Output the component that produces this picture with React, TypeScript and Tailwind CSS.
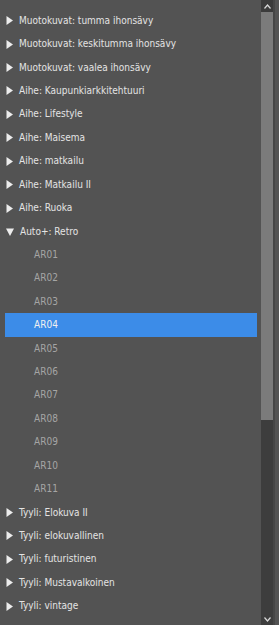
import React from "react";

const before = [
  "Muotokuvat: tumma ihonsävy",
  "Muotokuvat: keskitumma ihonsävy",
  "Muotokuvat: vaalea ihonsävy",
  "Aihe: Kaupunkiarkkitehtuuri",
  "Aihe: Lifestyle",
  "Aihe: Maisema",
  "Aihe: matkailu",
  "Aihe: Matkailu II",
  "Aihe: Ruoka",
];
const items = ["AR01","AR02","AR03","AR04","AR05","AR06","AR07","AR08","AR09","AR10","AR11"];
const after = [
  "Tyyli: Elokuva II",
  "Tyyli: elokuvallinen",
  "Tyyli: futuristinen",
  "Tyyli: Mustavalkoinen",
  "Tyyli: vintage",
];

function Tri({ open }: { open?: boolean }) {
  return open ? (
    <svg width="8" height="8" viewBox="0 0 8 8" className="shrink-0">
      <path d="M0 0.5 L8 0.5 L4 8 Z" fill="#ececec" />
    </svg>
  ) : (
    <svg width="7" height="9" viewBox="0 0 7 9" className="shrink-0">
      <path d="M0.5 0 L7 4.5 L0.5 9 Z" fill="#ececec" />
    </svg>
  );
}

function Group({ label, open }: { label: string; open?: boolean }) {
  return (
    <div className="h-[23.43px] flex items-center pl-[6px] gap-[6px] text-[#e4e4e4]">
      <Tri open={open} />
      <span>{label}</span>
    </div>
  );
}

export default function App() {
  return (
    <div
      className="w-[279px] h-[625px] bg-[#535353] flex overflow-hidden text-[10px] leading-none"
      style={{ fontFamily: '"DejaVu Sans Condensed", "Liberation Sans", sans-serif' }}
    >
      <div className="flex-1 pt-[9px]">
        {before.map((t) => (
          <Group key={t} label={t} />
        ))}
        <Group label="Auto+: Retro" open />
        {items.map((t) => (
          <div
            key={t}
            className={
              "h-[23.43px] flex items-center ml-[5px] mr-[4px] pl-[29px] " +
              (t === "AR04" ? "bg-[#3c8ce8] text-[#f0f0f0]" : "text-[#a5a5a5]")
            }
          >
            {t}
          </div>
        ))}
        {after.map((t) => (
          <Group key={t} label={t} />
        ))}
      </div>
      <div className="w-[12px] flex flex-col bg-[#3d3d3d]">
        <div className="h-[12px] flex items-center justify-center bg-[#3b3b3b]">
          <svg width="7" height="5" viewBox="0 0 7 5">
            <path d="M0.5 4.5 L3.5 1 L6.5 4.5" stroke="#d8d8d8" strokeWidth="1.2" fill="none" />
          </svg>
        </div>
        <div className="h-[408px] bg-[#7b7b7b]" />
        <div className="flex-1" />
        <div className="h-[12px] flex items-center justify-center">
          <svg width="7" height="5" viewBox="0 0 7 5">
            <path d="M0.5 0.5 L3.5 4 L6.5 0.5" stroke="#d8d8d8" strokeWidth="1.2" fill="none" />
          </svg>
        </div>
      </div>
      <div className="w-[2px] bg-[#464646]" />
      <div className="w-[4px] bg-[#535353]" />
    </div>
  );
}
